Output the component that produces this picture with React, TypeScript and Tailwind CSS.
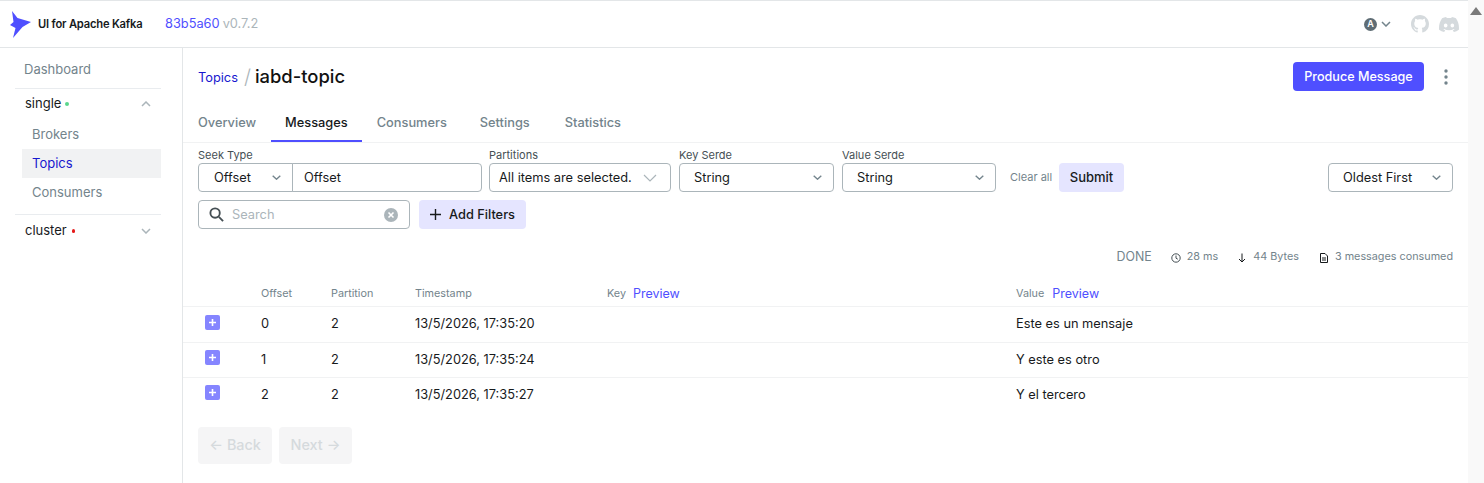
import React from "react";

const Chevron = ({ up = false, className = "" }: { up?: boolean; className?: string }) => (
  <svg width="10" height="6" viewBox="0 0 10 6" fill="none" className={className}>
    <path d={up ? "M1 5L5 1L9 5" : "M1 1L5 5L9 1"} stroke="currentColor" strokeWidth="1.5" />
  </svg>
);

const Logo = () => (
  <svg width="22" height="27" viewBox="0 0 22 27" className="shrink-0">
    <path d="M2 0 L7.5 7 L21 11 L12.5 16 L3 27 L5.5 17 L0 14 L3.5 11 Z" fill="#4f4fff" />
  </svg>
);

const Select = ({ text, className }: { text: string; className: string }) => (
  <div className={`flex h-[29px] items-center justify-between rounded border border-[#abb5ba] bg-white pr-[11px] text-[#171a1c] ${className}`}>
    <span>{text}</span>
    <svg width="9" height="5" viewBox="0 0 9 5" fill="none" className="text-[#73848c]">
      <path d="M0.7 0.7L4.5 4.2L8.3 0.7" stroke="currentColor" strokeWidth="1.4" />
    </svg>
  </div>
);

const Field = ({ label, children }: { label: string; children: React.ReactNode }) => (
  <div className="flex flex-col">
    <span className="h-[18px] text-[11px] leading-[20px] text-[#454f54]">{label}</span>
    {children}
  </div>
);

const rows = [
  ["0", "13/5/2026, 17:35:20", "Este es un mensaje", "h-[36px] border-b pb-[2px]", "-mt-[3px]"],
  ["1", "13/5/2026, 17:35:24", "Y este es otro", "h-[35px] border-b pb-[1px]", "-mt-[5px]"],
  ["2", "13/5/2026, 17:35:27", "Y el tercero", "h-[35px] pb-[2px]", "-mt-[4px]"],
];

export default function App() {
  return (
    <div className="flex h-[483px] w-[1484px] overflow-hidden bg-white text-[12.8px] font-['Inter',sans-serif]">
      <div className="flex w-[1468px] flex-col">
        <header className="flex h-[48px] items-center justify-between border-y border-[#e3e6e8] pl-[10px] pr-[9px]">
          <div className="flex items-center">
            <Logo />
            <span className="ml-[6px] w-[127px] text-[11.2px] font-semibold tracking-[-0.2px] text-[#171a1c]">UI for Apache Kafka</span>
            <span className="text-[12.8px] text-[#4f4fff]">83b5a60</span>
            <span className="ml-[3px] text-[12.8px] text-[#abb5ba]">v0.7.2</span>
          </div>
          <div className="flex items-center">
            <span className="flex h-[13px] w-[13px] items-center justify-center rounded-full bg-[#5f6d75] text-[9px] font-semibold text-white">A</span>
            <Chevron className="ml-[4px] text-[#73848c]" />
            <svg width="18" height="18" viewBox="0 0 16 16" fill="#d5dadd" className="ml-[20px]">
              <path d="M8 0C3.58 0 0 3.58 0 8c0 3.54 2.29 6.53 5.47 7.59.4.07.55-.17.55-.38 0-.19-.01-.82-.01-1.49-2.01.37-2.53-.49-2.69-.94-.09-.23-.48-.94-.82-1.13-.28-.15-.68-.52-.01-.53.63-.01 1.08.58 1.23.82.72 1.21 1.87.87 2.33.66.07-.52.28-.87.51-1.07-1.78-.2-3.64-.89-3.64-3.95 0-.87.31-1.59.82-2.15-.08-.2-.36-1.02.08-2.12 0 0 .67-.21 2.2.82.64-.18 1.32-.27 2-.27s1.36.09 2 .27c1.53-1.04 2.2-.82 2.2-.82.44 1.1.16 1.92.08 2.12.51.56.82 1.27.82 2.15 0 3.07-1.87 3.75-3.65 3.95.29.25.54.73.54 1.48 0 1.07-.01 1.93-.01 2.2 0 .21.15.46.55.38A8.01 8.01 0 0 0 16 8c0-4.42-3.58-8-8-8z" />
            </svg>
            <svg width="20" height="15" viewBox="0 0 16 12" fill="#d5dadd" className="ml-[10px]">
              <path d="M13.55 1a13.2 13.2 0 0 0-3.3-1l-.42.85a12.2 12.2 0 0 0-3.66 0L5.75 0a13.2 13.2 0 0 0-3.3 1C.36 4.1-.2 7.13.08 10.1A13.3 13.3 0 0 0 4.12 12l.87-1.4c-.48-.18-.93-.4-1.36-.66l.33-.26a9.5 9.5 0 0 0 8.08 0l.33.26c-.43.26-.88.48-1.36.66l.87 1.4a13.3 13.3 0 0 0 4.04-1.9c.33-3.44-.56-6.44-2.37-9.1zM5.34 8.3c-.79 0-1.44-.72-1.44-1.6 0-.88.63-1.6 1.44-1.6.8 0 1.45.72 1.44 1.6 0 .88-.64 1.6-1.44 1.6zm5.32 0c-.79 0-1.44-.72-1.44-1.6 0-.88.63-1.6 1.44-1.6.81 0 1.45.72 1.44 1.6 0 .88-.63 1.6-1.44 1.6z" />
            </svg>
          </div>
        </header>
        <div className="flex flex-1">
          <aside className="w-[183px] border-r border-[#e3e6e8] pl-[15px] pr-[21px] text-[#171a1c]">
            <div className="flex h-[41px] items-center border-b border-[#e9ecef] pl-[9px] pt-[4px] text-[13px] text-[#73848c]">Dashboard</div>
            <div className="flex h-[29px] items-center justify-between pl-[10px] pr-[10px] text-[13px]">
              <span className="flex items-center">single<span className="ml-[4px] h-[4px] w-[4px] rounded-full bg-[#5ad68c]" /></span>
              <Chevron up className="text-[#abb5ba]" />
            </div>
            <div className="ml-[7px] mt-[2px] flex flex-col text-[13px]">
              <div className="flex h-[29px] items-center pl-[10px] text-[#73848c]">Brokers</div>
              <div className="flex h-[29px] items-center bg-[#f1f2f3] pl-[10px] text-[#1717cf]">Topics</div>
              <div className="flex h-[29px] items-center pl-[10px] text-[#73848c]">Consumers</div>
            </div>
            <div className="mt-[7px] flex h-[32px] items-center justify-between border-t border-[#e9ecef] pl-[10px] pr-[10px] text-[13px]">
              <span className="flex items-center">cluster<span className="ml-[5px] h-[4px] w-[3px] rounded-full bg-[#e51a1a]" /></span>
              <Chevron className="text-[#abb5ba]" />
            </div>
          </aside>
          <main className="flex min-w-0 flex-1 flex-col">
            <div className="flex h-[57px] items-center justify-between pl-[15px] pr-[15px]">
              <div className="flex items-center">
                <span className="mt-[2px] text-[12.8px] text-[#1717cf]">Topics</span>
                <span className="ml-[6px] text-xl font-light text-[#abb5ba]">/</span>
                <span className="ml-[4px] text-[18.4px] font-medium text-[#111]">iabd-topic</span>
              </div>
              <div className="flex items-center">
                <button className="h-[29px] w-[131px] rounded bg-[#4f4fff] pt-[2px] text-[12.6px] font-medium text-white">Produce Message</button>
                <svg width="4" height="16" viewBox="0 0 4 16" fill="#73848c" className="ml-[20px] mr-[5px]">
                  <circle cx="2" cy="2" r="1.7" /><circle cx="2" cy="8" r="1.7" /><circle cx="2" cy="14" r="1.7" />
                </svg>
              </div>
            </div>
            <nav className="flex h-[38px] border-b border-[#f1f2f3] pl-[15px] text-[12.8px] font-medium text-[#73848c]">
              <span className="flex items-center border-b-2 border-transparent pr-[15px]">Overview</span>
              <span className="flex items-center border-b-2 border-[#4f4fff] px-[14px] text-[#171a1c]">Messages</span>
              <span className="flex items-center border-b-2 border-transparent pl-[15px] pr-[17px]">Consumers</span>
              <span className="flex items-center border-b-2 border-transparent pl-[16px] pr-[18px]">Settings</span>
              <span className="flex items-center border-b-2 border-transparent px-[17px]">Statistics</span>
            </nav>
            <div className="flex items-end pl-[15px] pr-[15px] pt-[2px] text-[12.8px]">
              <Field label="Seek Type">
                <div className="flex">
                  <Select text="Offset" className="w-[95px] rounded-r-none pl-[15px]" />
                  <div className="-ml-px flex h-[29px] w-[190px] items-center rounded-r border border-[#abb5ba] pl-[11px] text-[#171a1c]">Offset</div>
                </div>
              </Field>
              <div className="ml-[7px]">
                <Field label="Partitions">
                  <div className="flex h-[29px] w-[182px] items-center justify-between rounded border border-[#abb5ba] pl-[9px] pr-[13px] text-[#171a1c]">
                    <span>All items are selected.</span>
                    <svg width="14" height="8" viewBox="0 0 14 8" fill="none" stroke="#abb5ba" strokeWidth="1.2"><path d="M1 1L7 7L13 1" /></svg>
                  </div>
                </Field>
              </div>
              <div className="ml-[8px]">
                <Field label="Key Serde"><Select text="String" className="w-[155px] pl-[14px]" /></Field>
              </div>
              <div className="ml-[8px]">
                <Field label="Value Serde"><Select text="String" className="w-[154px] pl-[14px]" /></Field>
              </div>
              <span className="ml-[14px] flex h-[29px] w-[49px] items-center text-[11px] text-[#73848c]">Clear all</span>
              <button className="h-[29px] w-[65px] rounded bg-[#e5e5ff] text-[13px] font-medium text-[#171a1c]">Submit</button>
              <Select text="Oldest First" className="ml-auto w-[125px] pl-[14px]" />
            </div>
            <div className="mt-[8px] flex pl-[15px]">
              <div className="flex h-[29px] w-[212px] items-center rounded border border-[#abb5ba] pl-[10px] pr-[11px] text-[12.8px]">
                <svg width="15" height="15" viewBox="0 0 16 16" fill="none" stroke="#454f54" strokeWidth="2">
                  <circle cx="6.5" cy="6.5" r="5" /><path d="M10.5 10.5L15 15" />
                </svg>
                <span className="ml-[8px] flex-1 text-[#abb5ba]">Search</span>
                <svg width="14" height="14" viewBox="0 0 14 14">
                  <circle cx="7" cy="7" r="7" fill="#abb5ba" />
                  <path d="M4.5 4.5L9.5 9.5M9.5 4.5L4.5 9.5" stroke="#fff" strokeWidth="1.6" />
                </svg>
              </div>
              <button className="ml-[9px] flex h-[29px] w-[107px] items-center justify-center rounded bg-[#e5e5ff] text-[12.8px] font-medium text-[#171a1c]">
                <svg width="11" height="11" viewBox="0 0 11 11" stroke="#171a1c" strokeWidth="1.4"><path d="M5.5 0V11M0 5.5H11" /></svg>
                <span className="ml-[8px]">Add Filters</span>
              </button>
            </div>
            <div className="mt-[18px] flex h-[20px] items-center justify-end pr-[15px] pt-[1px] text-[10.8px] text-[#73848c]">
              <span className="text-[12.4px]">DONE</span>
              <svg width="10" height="10" viewBox="0 0 10 10" fill="none" stroke="#454f54" strokeWidth="1" className="ml-[19px]">
                <circle cx="5" cy="5" r="4.2" /><path d="M5 2.5V5.2L6.8 6.2" />
              </svg>
              <span className="ml-[6px]">28 ms</span>
              <svg width="8" height="10" viewBox="0 0 8 10" fill="none" stroke="#171a1c" strokeWidth="1" className="ml-[20px]">
                <path d="M4 0.5V9M1 6L4 9L7 6" />
              </svg>
              <span className="ml-[7px]">44 Bytes</span>
              <svg width="8" height="10" viewBox="0 0 8 10" fill="none" stroke="#171a1c" strokeWidth="1" className="ml-[21px]">
                <path d="M0.5 0.5H5L7.5 3V9.5H0.5ZM2 5H6M2 7H6" />
              </svg>
              <span className="ml-[7px]">3 messages consumed</span>
            </div>
            <div className="mt-[13px] grid h-[27px] grid-cols-[78px_70px_84px_192px_409px_1fr] items-center border-b border-[#f1f2f3] pt-[2px] text-[10.8px] text-[#73848c]">
              <span />
              <span>Offset</span>
              <span>Partition</span>
              <span>Timestamp</span>
              <span className="flex items-center">Key<span className="ml-[7px] text-[12.5px] text-[#4f4fff]">Preview</span></span>
              <span className="flex items-center">Value<span className="ml-[8px] text-[12.5px] text-[#4f4fff]">Preview</span></span>
            </div>
            {rows.map(([o, t, v, h, m]) => (
              <div key={o} className={`grid grid-cols-[78px_70px_84px_192px_409px_1fr] items-center border-[#f1f2f3] text-[12.8px] text-[#171a1c] ${h}`}>
                <span className="pl-[22px]">
                  <span className={`flex h-[15px] w-[15px] items-center justify-center rounded-[2px] bg-[#8585ff] ${m}`}>
                    <svg width="7" height="7" viewBox="0 0 7 7" stroke="#fff" strokeWidth="1.6"><path d="M3.5 0V7M0 3.5H7" /></svg>
                  </span>
                </span>
                <span>{o}</span>
                <span>2</span>
                <span>{t}</span>
                <span />
                <span>{v}</span>
              </div>
            ))}
            <div className="mt-[14px] flex gap-[7px] pl-[15px] text-[14.4px] font-medium text-[#d5dadd]">
              <span className="flex h-[37px] w-[74px] items-center justify-center gap-[4px] rounded bg-[#f5f5f6] pb-[2px]"><span>←</span>Back</span>
              <span className="flex h-[37px] w-[73px] items-center justify-center gap-[4px] rounded bg-[#f5f5f6] pb-[2px]">Next<span>→</span></span>
            </div>
          </main>
        </div>
      </div>
      <div className="flex w-[16px] flex-col items-center bg-[#f9f9f9] pt-[7px]">
        <div className="h-0 w-0 border-x-[6px] border-b-[8px] border-x-transparent border-b-[#7a7a7a]" />
      </div>
    </div>
  );
}
